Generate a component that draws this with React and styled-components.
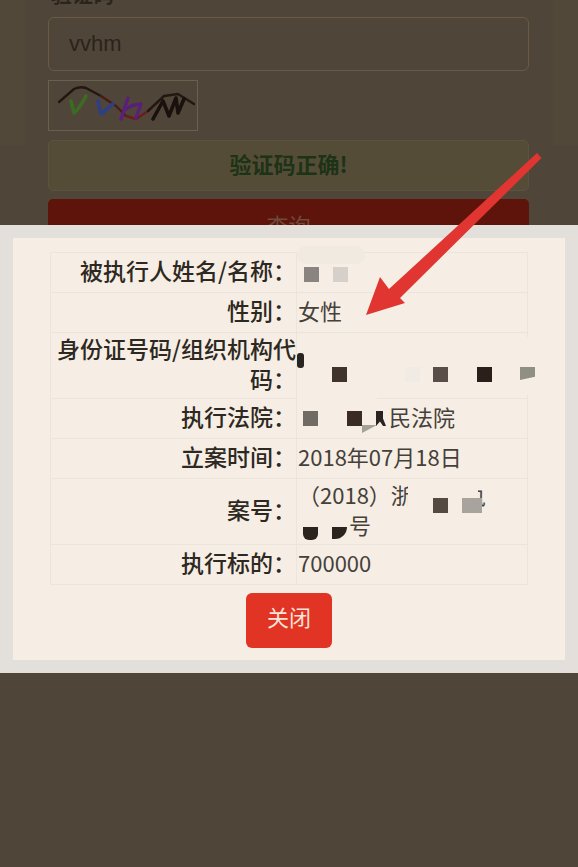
import { createGlobalStyle, styled } from "styled-components";

const GlobalStyle = createGlobalStyle`
	html, body {
		margin: 0;
		padding: 0;
		background: #4f4639;
	}
	body {
		font-family: "Noto Sans CJK SC", "Noto Sans", sans-serif;
	}
`;

const Page = styled.div`
	position: relative;
	width: 578px;
	height: 867px;
	overflow: hidden;
	background: #4f4639;
`;

const Form = styled.div`
	display: flex;
	flex-direction: column;
	gap: 9px;
	margin: -18px 0 0;
	padding: 0 49px 0 48px;
	background: linear-gradient(
			to right,
			#52483a 0,
			#52483a 25px,
			#4f4639 25px,
			#4f4639 553px,
			#52483a 553px
		)
		no-repeat top / 100% 163px;
`;

const FieldLabel = styled.div`
	height: 22px;
	padding: 0 0 4px 3px;
	font-size: 21px;
	line-height: 22px;
	font-weight: 700;
	color: #2b241c;
`;

const Input = styled.div`
	box-sizing: border-box;
	height: 54px;
	padding: 0 20px;
	display: flex;
	align-items: center;
	border: 1px solid #6b5a45;
	border-radius: 6px;
	font-family: "Liberation Sans", sans-serif;
	font-size: 22px;
	color: #2c231b;
`;

const Captcha = styled.svg`
	display: block;
	width: 150px;
	height: 51px;
	box-sizing: border-box;
	border: 1px solid #6b5f4e;
`;

const Notice = styled.div`
	box-sizing: border-box;
	height: 51px;
	padding-bottom: 5px;
	display: flex;
	align-items: center;
	justify-content: center;
	background: #554c38;
	border: 1px solid #5b5240;
	border-radius: 5px;
	font-size: 22px;
	font-weight: 700;
	color: #1c3315;
`;

const QueryButton = styled.div`
	height: 46px;
	box-sizing: border-box;
	padding-top: 4px;
	display: flex;
	align-items: center;
	justify-content: center;
	margin-top: -1px;
	background: #5e140a;
	border-radius: 5px;
	font-size: 22px;
	color: #6e4a3c;
`;

const Modal = styled.div`
	position: absolute;
	left: 0;
	right: 0;
	top: 225px;
	height: 448px;
	box-sizing: border-box;
	padding: 13px 13px;
	background: #e3e0dc;
`;

const ModalBody = styled.div`
	height: 100%;
	box-sizing: border-box;
	padding: 14px 37px 0;
	background: #f6eee4;
`;

const InfoTable = styled.table`
	width: 478px;
	border-collapse: collapse;
	table-layout: fixed;
	font-size: 22px;
	line-height: 30px;
	color: #2d2822;
`;

const Row = styled.tr`
	height: ${(p) => (p.$tall ? "66px" : "40px")};
`;

const LabelCell = styled.td`
	width: 246px;
	box-sizing: border-box;
	padding: 0 0 5px 0;
	border: 1px solid #ebe5db;
	text-align: right;
	font-size: 23px;
	font-weight: 500;
`;

const ValueCell = styled.td`
	position: relative;
	box-sizing: border-box;
	padding: 0 1px 5px;
	border: 1px solid #ebe5db;
	color: #45403a;
`;

const Gap = styled.span`
	display: inline-block;
	width: ${(p) => p.$w}px;
`;

// mosaic left over the personal data, sits on top of the cell text
const Mark = styled.i`
	position: absolute;
	left: ${(p) => p.$x}px;
	top: ${(p) => p.$y}px;
	width: ${(p) => p.$w || 15}px;
	height: ${(p) => p.$h || 15}px;
	background: ${(p) => p.$c || "#f6eee4"};
	border-radius: ${(p) => p.$r || "0"};
	clip-path: ${(p) => p.$clip || "none"};
`;

const Actions = styled.div`
	display: flex;
	justify-content: center;
	padding: 8px 0 0;
`;

const CloseButton = styled.button`
	width: 86px;
	height: 55px;
	padding: 0 0 10px;
	border: 0;
	border-radius: 6px;
	background: #e23424;
	color: #f9e4d8;
	font-family: inherit;
	font-size: 22px;
`;

const Arrow = styled.svg`
	position: absolute;
	left: 0;
	top: 0;
	width: 578px;
	height: 867px;
	pointer-events: none;
`;

function App() {
	return (
		<Page>
			<GlobalStyle />

			<Form>
				<FieldLabel>验证码</FieldLabel>
				<Input>vvhm</Input>
				<Captcha viewBox="0 0 148 49">
					<g fill="none" strokeLinecap="round" strokeLinejoin="round">
						<path d="M10 21 L25 8 Q31 5 37 7 L52 15" stroke="#241712" strokeWidth="2.4" />
						<path d="M52 15 L67 25 L77 35" stroke="#4a1c18" strokeWidth="2.4" />
						<path d="M77 35 L87 38 L99 30" stroke="#6a1c20" strokeWidth="2.4" />
						<path d="M99 30 L115 15 L129 13 L145 23" stroke="#241712" strokeWidth="2.4" />
						<path d="M22 20 L25 32 Q30 28 37 15" stroke="#3d6b22" strokeWidth="3.6" />
						<path d="M49 20 L52 33 L64 23" stroke="#2f3f86" strokeWidth="3.6" />
						<path d="M79 17 L72 38 M75 29 Q84 23 92 23 L87 37" stroke="#5a1f78" strokeWidth="3.4" />
						<path d="M104 38 L114 20 L120 35 L127 17 L129 32 L135 18" stroke="#1a100d" strokeWidth="3.6" />
					</g>
				</Captcha>
				<Notice>验证码正确!</Notice>
				<QueryButton>查询</QueryButton>
			</Form>

			<Modal>
				<ModalBody>
					<InfoTable>
						<tbody>
							<Row>
								<LabelCell>被执行人姓名/名称：</LabelCell>
								<ValueCell>
									<Mark $x={0} $y={-7} $w={68} $h={18} $r="10px" $c="#f0eae1" />
									<Mark $x={7} $y={14} $c="#8a8480" />
									<Mark $x={36} $y={14} $c="#d5d0ca" />
								</ValueCell>
							</Row>
							<Row>
								<LabelCell>性别：</LabelCell>
								<ValueCell>女性</ValueCell>
							</Row>
							<Row $tall>
								<LabelCell>身份证号码/组织机构代码：</LabelCell>
								<ValueCell>
									<Mark $x={0} $y={60} $w={80} $h={8} />
									<Mark $x={225} $y={4} $w={8} $h={58} />
									<Mark $x={0} $y={20} $w={7} $h={15} $r="3px" $c="#2a2420" />
									<Mark $x={35} $y={34} $c="#40332b" />
									<Mark $x={108} $y={34} $c="#f0ebe4" />
									<Mark $x={136} $y={34} $c="#5a4e48" />
									<Mark $x={180} $y={34} $c="#2a1f1a" />
									<Mark $x={223} $y={34} $h={13} $c="#8f8f86" $clip="polygon(0 0, 100% 0, 100% 75%, 0 100%)" />
								</ValueCell>
							</Row>
							<Row>
								<LabelCell>执行法院：</LabelCell>
								<ValueCell>
									<Gap $w={91} />
									民法院
									<Mark $x={6} $y={12} $c="#716b66" />
									<Mark $x={50} $y={12} $c="#3a2c25" />
									<Mark $x={65} $y={26} $h={8} $c="#a5a09a" $clip="polygon(0 100%, 100% 0, 0 0)" />
									<Mark $x={79} $y={12} $w={10} $c="#2a2420" $clip="polygon(0 0, 70% 0, 70% 50%, 100% 100%, 70% 100%, 40% 70%, 0 100%)" />
								</ValueCell>
							</Row>
							<Row>
								<LabelCell>立案时间：</LabelCell>
								<ValueCell>2018年07月18日</ValueCell>
							</Row>
							<Row $tall>
								<LabelCell>案号：</LabelCell>
								<ValueCell>
									（2018）浙
									<Gap $w={51} />
									执
									<br />
									<Gap $w={51} />
									号
									<Mark $x={111} $y={3} $w={70} $h={32} />
									<Mark $x={136} $y={19} $c="#554a42" />
									<Mark $x={165} $y={19} $w={20} $c="#a8a39d" />
									<Mark $x={6} $y={48} $h={13} $r="0 0 6px 6px" $c="#2a231e" />
									<Mark $x={35} $y={48} $h={12} $r="0 0 12px 0" $c="#2a231e" />
								</ValueCell>
							</Row>
							<Row>
								<LabelCell>执行标的：</LabelCell>
								<ValueCell>700000</ValueCell>
							</Row>
						</tbody>
					</InfoTable>
					<Actions>
						<CloseButton>关闭</CloseButton>
					</Actions>
				</ModalBody>
			</Modal>

			<Arrow viewBox="0 0 578 867">
				<path d="M537 153 L541.5 158 L400 298 L405 303 L366 315 L380 277 L389 289 Z" fill="#e03530" />
			</Arrow>
		</Page>
	);
}

export default App;
